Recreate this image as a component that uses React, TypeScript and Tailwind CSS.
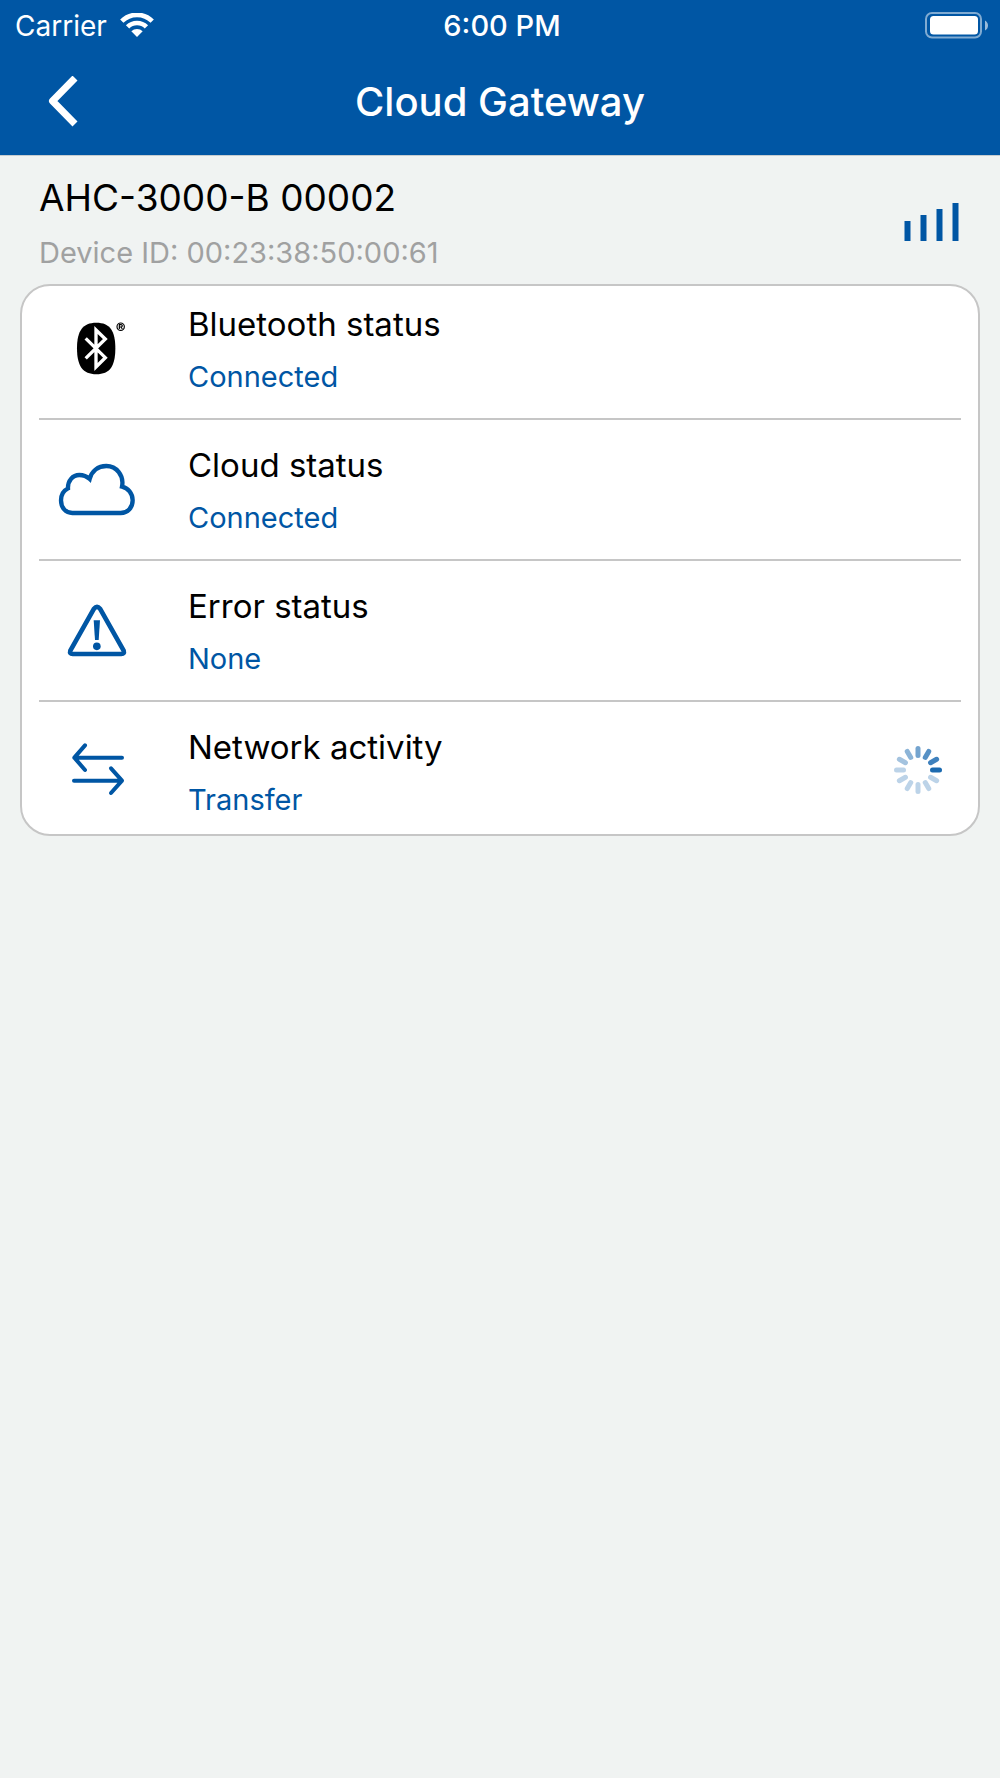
import type { ReactNode } from 'react';

const SPOKES = [0.95, 0.28, 0.28, 0.28, 0.28, 0.28, 0.28, 0.38, 0.48, 0.58, 0.7, 0.8];

function WifiIcon() {
  return (
    <svg width="36" height="26" viewBox="0 2 108 78" fill="none" aria-hidden="true">
      <path d="M8.4 26.4A64.5 64.5 0 0 1 99.6 26.4" stroke="white" strokeWidth="14" />
      <path d="M25.7 43.7A40 40 0 0 1 82.3 43.7" stroke="white" strokeWidth="14" />
      <path d="M37 57A24 24 0 0 1 71 57L54 74Z" fill="white" />
    </svg>
  );
}

function BatteryIcon() {
  return (
    <svg width="64" height="28" viewBox="0 0 64 28" fill="none" aria-hidden="true">
      <rect x="1" y="1" width="55" height="24.5" rx="6" stroke="white" strokeOpacity="0.5" strokeWidth="2" />
      <rect x="5" y="4" width="48" height="18.5" rx="3.5" fill="white" />
      <path d="M60 8.5C64 10.5 64 16.5 60 18.5Z" fill="white" fillOpacity="0.6" />
    </svg>
  );
}

function SignalIcon() {
  return (
    <svg width="56" height="40" viewBox="0 1 56 40" fill="#0056a4" role="img" aria-label="Signal strength">
      <rect x="0.5" y="20" width="6" height="20" />
      <rect x="16.5" y="14" width="6" height="26" />
      <rect x="32.5" y="8" width="6" height="32" />
      <rect x="48.5" y="2" width="6" height="38" />
    </svg>
  );
}

function BluetoothIcon() {
  return (
    <svg width="94" height="80" viewBox="0 -2 282 240" fill="none" aria-hidden="true">
      <path
        d="M139 39C180 39 196 63 196 116C196 169 180 194 139 194C98 194 81 169 81 116C81 63 98 39 139 39Z"
        fill="black"
      />
      <path d="M107 86L166 144L138 172V61L166 88L107 146" stroke="white" strokeWidth="10" />
      <circle cx="212" cy="51" r="11" stroke="black" strokeWidth="3.5" />
      <path d="M208 58V45H213Q217 45 217 48.5Q217 52 213 52H208M213 52L217 58" stroke="black" strokeWidth="3.5" />
    </svg>
  );
}

function CloudIcon() {
  return (
    <svg width="94" height="80" viewBox="0 0 282 240" fill="none" aria-hidden="true">
      <path
        d="M67 189H212C234 189 248 172 248 151C248 130 234 114 216 110C223 76 199 48 169 48C143 48 125 64 119 87C108 77 98 75 88 75C68 75 53 92 54 115C40 122 33 135 33 151C33 173 47 189 67 189Z"
        stroke="#0056a4"
        strokeWidth="13"
      />
    </svg>
  );
}

function WarningIcon() {
  return (
    <svg width="94" height="80" viewBox="0 2 282 240" fill="none" aria-hidden="true">
      <path
        d="M132 55Q141 44 150 55L221 181Q224 191 214 191H68Q58 191 61 181Z"
        stroke="#0056a4"
        strokeWidth="14"
        strokeLinejoin="round"
      />
      <path d="M131 90H150L146 149H135Z" fill="#0056a4" />
      <circle cx="140.5" cy="168" r="11.5" fill="#0056a4" />
    </svg>
  );
}

function TransferIcon() {
  return (
    <svg width="94" height="80" viewBox="0 7 282 240" fill="none" aria-hidden="true">
      <g stroke="#0056a4" strokeWidth="12" strokeLinecap="round" strokeLinejoin="round">
        <path d="M216 84H73M105 47L73 84L105 121" />
        <path d="M72 153H216M183 116L216 153L183 190" />
      </g>
    </svg>
  );
}

function Spinner() {
  return (
    <svg width="50" height="54" viewBox="0 0 50 54" role="img" aria-label="Transferring">
      {SPOKES.map((opacity, i) => (
        <rect
          key={i}
          x="37"
          y="22.5"
          width="12"
          height="5"
          rx="2.5"
          fill="#0f62ac"
          fillOpacity={opacity}
          transform={`rotate(${i * 30} 25 25)`}
        />
      ))}
    </svg>
  );
}

type Row = { title: string; value: string; icon: ReactNode; busy?: boolean };

const rows: Row[] = [
  { title: 'Bluetooth status', value: 'Connected', icon: <BluetoothIcon /> },
  { title: 'Cloud status', value: 'Connected', icon: <CloudIcon /> },
  { title: 'Error status', value: 'None', icon: <WarningIcon /> },
  { title: 'Network activity', value: 'Transfer', icon: <TransferIcon />, busy: true },
];

export default function App() {
  return (
    <div className="min-h-screen bg-[#f0f3f2] font-['Inter',sans-serif] text-black">
      <header className="border-b border-[#c5ccd0] bg-[#0056a4] pb-0.5 text-white">
        {/* Status bar */}
        <div className="grid h-[51px] grid-cols-[1fr_auto_1fr] items-center pr-[11px] pl-[15px] leading-9">
          <div className="flex items-center gap-3">
            <span className="text-[28px]">Carrier</span>
            <WifiIcon />
          </div>
          <span className="text-[29px] font-medium">6:00 PM</span>
          <div className="flex justify-end">
            <BatteryIcon />
          </div>
        </div>

        {/* Title bar */}
        <div className="grid h-[102px] grid-cols-[1fr_auto_1fr] items-center px-10">
          <button type="button" aria-label="Back" className="w-fit px-2">
            <svg width="30" height="52" viewBox="0 1 30 52" fill="none" aria-hidden="true">
              <path d="M27 3L4.5 26L27 49" stroke="white" strokeWidth="7" strokeLinejoin="round" />
            </svg>
          </button>
          <h1 className="text-[40px] leading-[48px] font-medium">Cloud Gateway</h1>
        </div>
      </header>

      <main>
        <section className="flex items-center justify-between pt-[17px] pr-10 pb-[13px] pl-[39px]">
          <div>
            <h2 className="text-[37px] leading-[50px]">AHC-3000-B 00002</h2>
            <p className="mt-3 text-[29px] leading-9 text-[#a0a1a1]">Device ID: 00:23:38:50:00:61</p>
          </div>
          <SignalIcon />
        </section>

        <ul className="mx-5 rounded-[30px] border-2 border-[#c6c6c6] bg-white px-[17px]">
          {rows.map((row) => (
            <li
              key={row.title}
              className="flex items-center border-b-2 border-[#c6c6c6] py-[7px] pr-[18px] pl-[11px] first:pt-0 last:border-b-0 last:pb-0"
            >
              {row.icon}
              <div className="ml-11 flex h-[125px] flex-1 flex-col justify-center gap-[15px] pt-0.5">
                <h3 className="text-[33px] leading-10">{row.title}</h3>
                <p className="text-[29px] leading-9 text-[#0056a4]">{row.value}</p>
              </div>
              {row.busy && <Spinner />}
            </li>
          ))}
        </ul>
      </main>
    </div>
  );
}
